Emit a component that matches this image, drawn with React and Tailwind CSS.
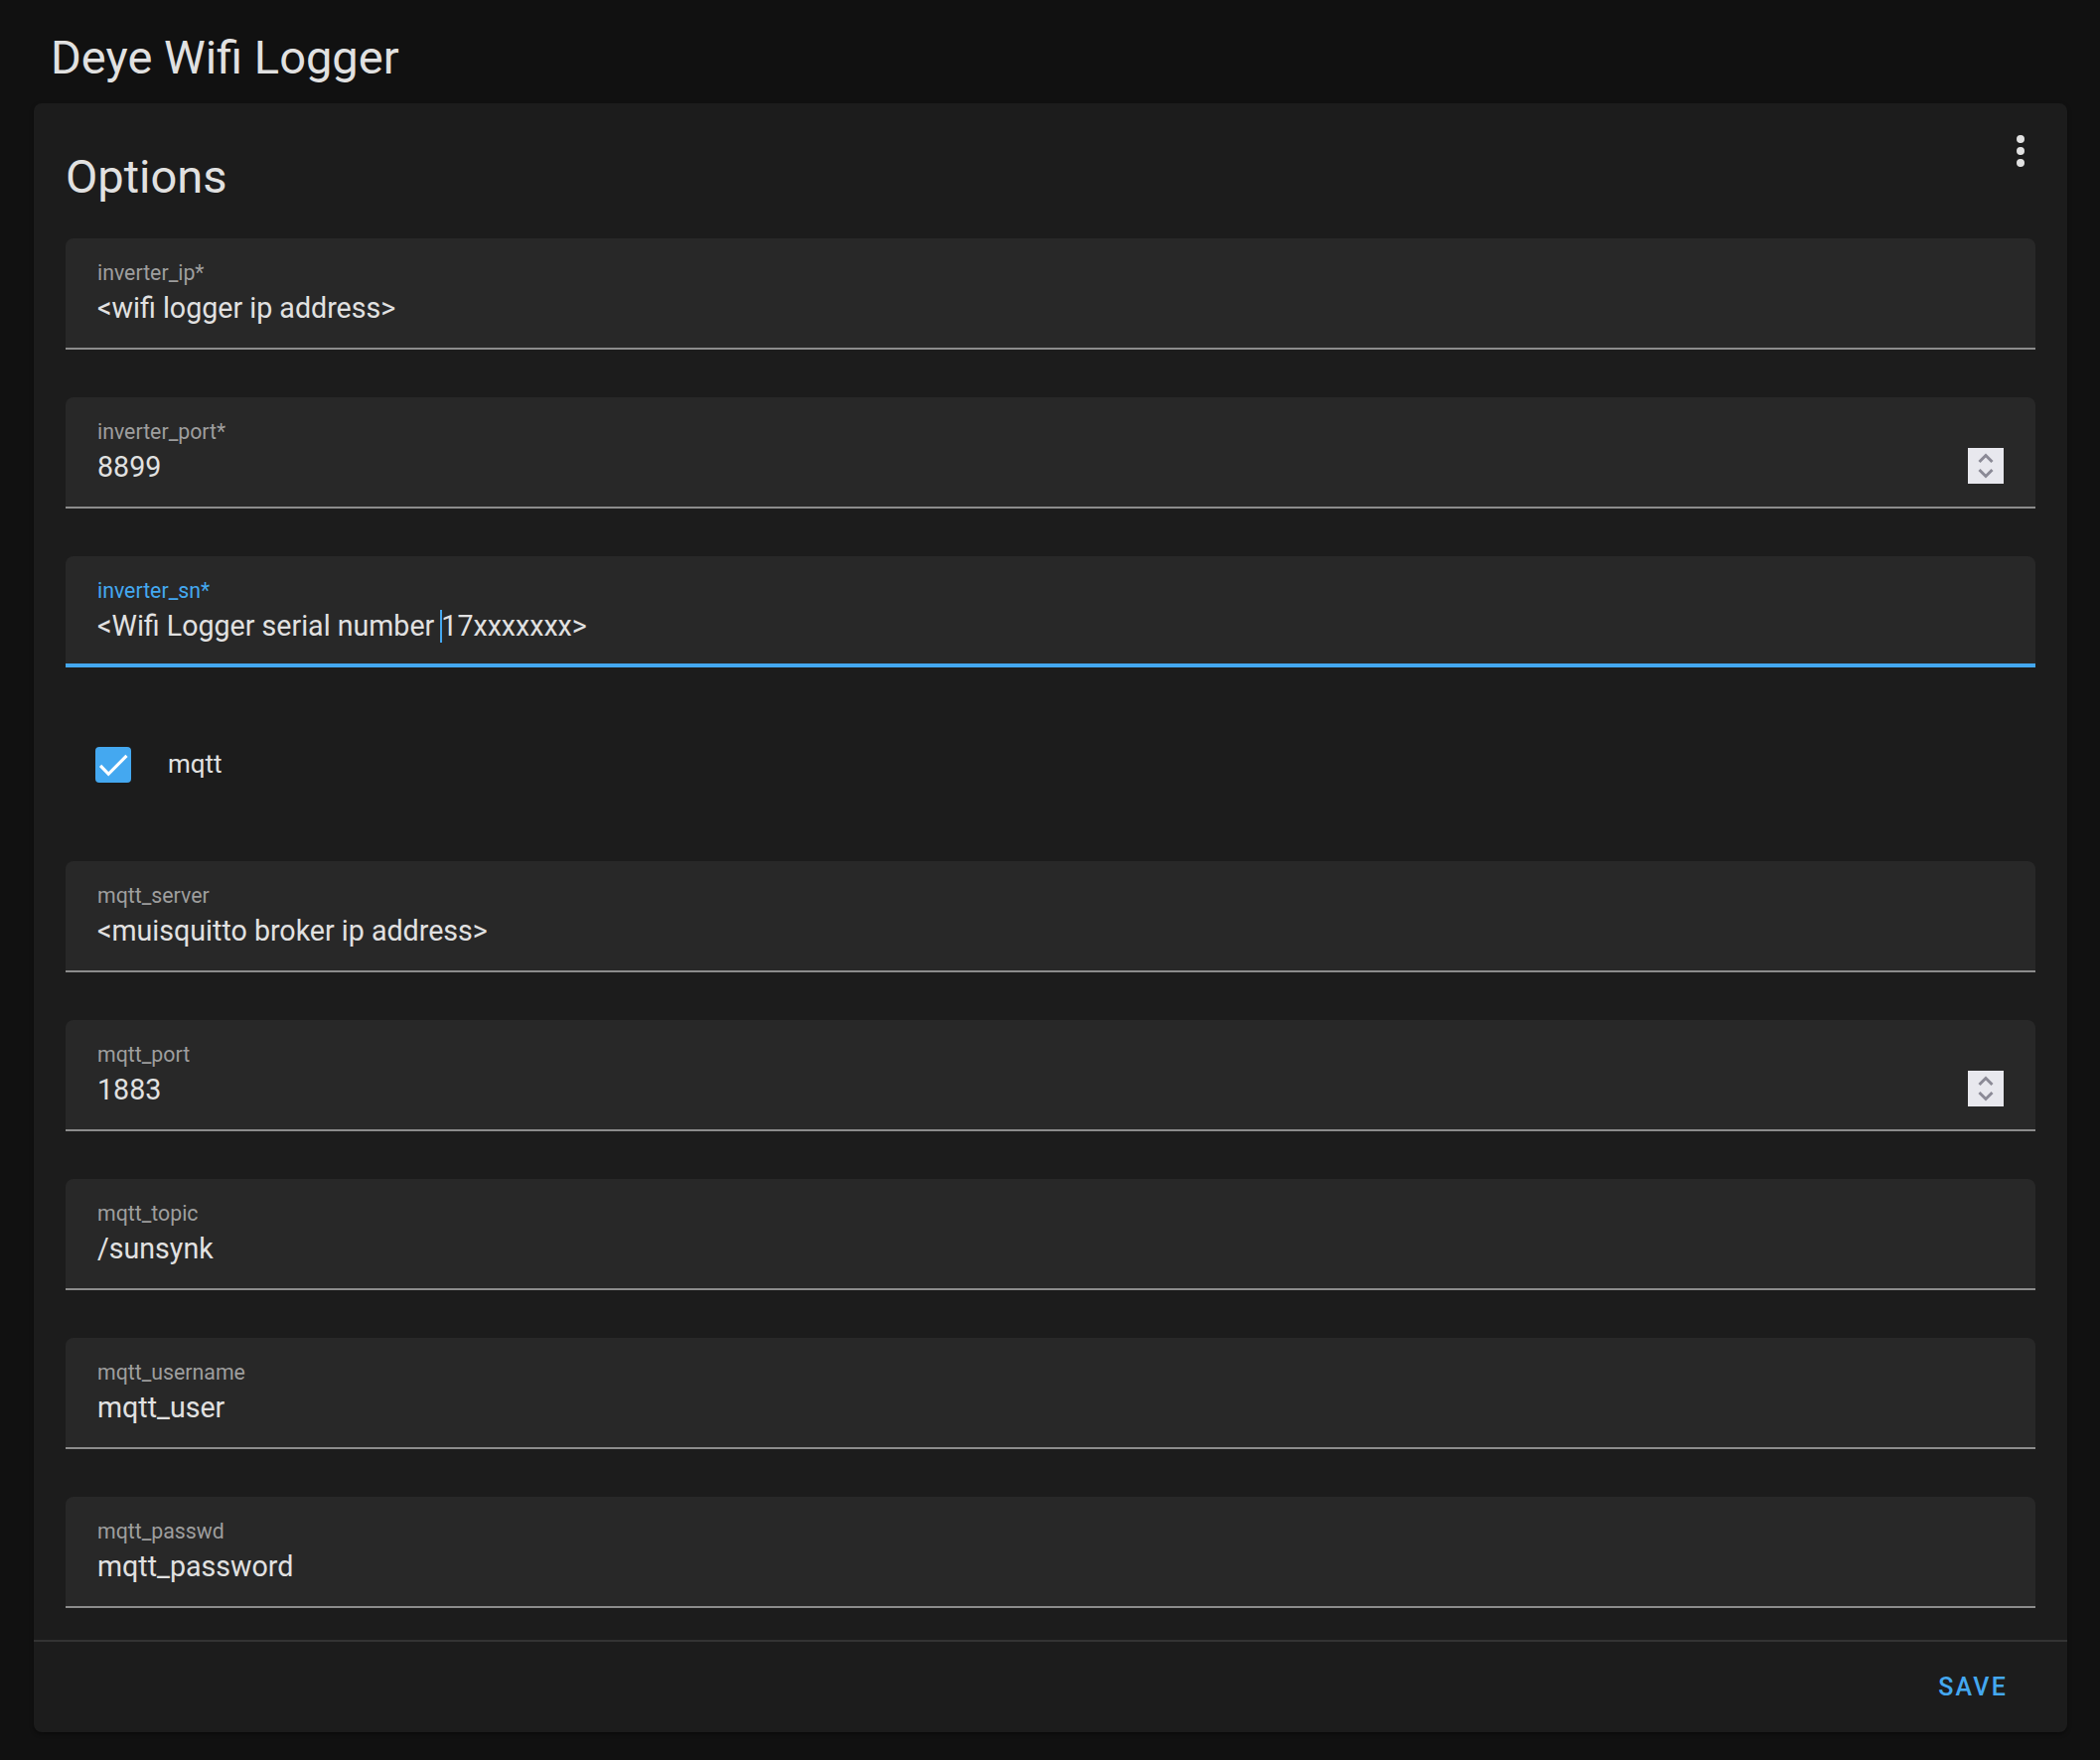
import React from "react";

function Spinner() {
  return (
    <div className="w-[36px] h-[36px] bg-[#e8e8ee] shrink-0">
      <svg width="36" height="36" viewBox="0 0 36 36" fill="none" stroke="#8b8a96" strokeWidth="3" strokeLinecap="butt" strokeLinejoin="miter">
        <path d="M11.5 14 L18 7.5 L24.5 14" />
        <path d="M11.5 22 L18 28.5 L24.5 22" />
      </svg>
    </div>
  );
}

function Field({ label, value, focused, spinner, children }) {
  return (
    <div
      className={
        "bg-[#282828] rounded-t-[8px] h-[112px] flex flex-col pl-[32px] pr-[32px] " +
        (focused ? "border-b-[4px] border-[#44a8f0]" : "border-b-[2px] border-[#8c8c8c]")
      }
    >
      <div
        className={
          "pt-[24px] text-[21.3px] leading-[21px] " +
          (focused ? "text-[#44a8f0]" : "text-[#9e9e9e]")
        }
      >
        {label}
      </div>
      <div className="mt-[11px] h-[28px] flex items-center justify-between">
        <div className="text-[28.6px] leading-[28px] text-[#e1e1e1] whitespace-pre">
          {children ? children : value}
        </div>
        {spinner ? <div className="-mt-[2px]"><Spinner /></div> : null}
      </div>
    </div>
  );
}

export default function App() {
  return (
    <div className="min-h-[1772px] bg-[#111111] font-['Roboto',sans-serif] pb-[28px]">
      <div className="pl-[51px] pt-[34px] h-[104px] text-[47px] leading-[47px] text-[#e1e1e1]">
        Deye Wifi Logger
      </div>
      <div className="ml-[34px] mr-[33px] bg-[#1c1c1c] rounded-[8px] shadow-[0_2px_4px_rgba(0,0,0,0.4)]">
        <div className="pt-[24px] pl-[32px] pr-[23px] flex items-start justify-between">
          <div className="mt-[26px] text-[47px] leading-[47px] text-[#e1e1e1]">Options</div>
          <button className="w-[48px] h-[48px] flex items-center justify-center">
            <svg width="48" height="48" viewBox="0 0 24 24" fill="#e1e1e1">
              <path d="M12,16A2,2 0 0,1 14,18A2,2 0 0,1 12,20A2,2 0 0,1 10,18A2,2 0 0,1 12,16M12,10A2,2 0 0,1 14,12A2,2 0 0,1 12,14A2,2 0 0,1 10,12A2,2 0 0,1 12,10M12,4A2,2 0 0,1 14,6A2,2 0 0,1 12,8A2,2 0 0,1 10,6A2,2 0 0,1 12,4Z" />
            </svg>
          </button>
        </div>
        <div className="px-[32px] pt-[39px] pb-[32px] flex flex-col">
          <div className="flex flex-col gap-[48px]">
            <Field label="inverter_ip*" value="<wifi logger ip address>" />
            <Field label="inverter_port*" value="8899" spinner />
            <Field label="inverter_sn*" focused>
              {"<Wifi Logger serial number "}
              <span className="inline-block w-[2px] h-[33px] bg-[#44a8f0] align-[-7.5px] -ml-[1px] -mr-[1px]"></span>
              {"17xxxxxxx>"}
            </Field>
          </div>
          <div className="pt-[78px] pb-[78px] pl-[30px] flex items-center">
            <div className="w-[36px] h-[36px] rounded-[4px] bg-[#44a8f0]">
              <svg width="36" height="36" viewBox="0 0 24 24" fill="none" stroke="#ffffff" strokeWidth="2.1">
                <path d="M3.4 12.6 L8.8 18.2 L21 5.9" />
              </svg>
            </div>
            <div className="ml-[37px] text-[26px] leading-normal text-[#e1e1e1]">mqtt</div>
          </div>
          <div className="flex flex-col gap-[48px]">
            <Field label="mqtt_server" value="<muisquitto broker ip address>" />
            <Field label="mqtt_port" value="1883" spinner />
            <Field label="mqtt_topic" value="/sunsynk" />
            <Field label="mqtt_username" value="mqtt_user" />
            <Field label="mqtt_passwd" value="mqtt_password" />
          </div>
        </div>
        <div className="border-t-[2px] border-[#333333] h-[93px] flex items-center justify-end pr-[60px]">
          <button className="text-[25px] font-medium tracking-[2.2px] text-[#44a8f0]">SAVE</button>
        </div>
      </div>
    </div>
  );
}
